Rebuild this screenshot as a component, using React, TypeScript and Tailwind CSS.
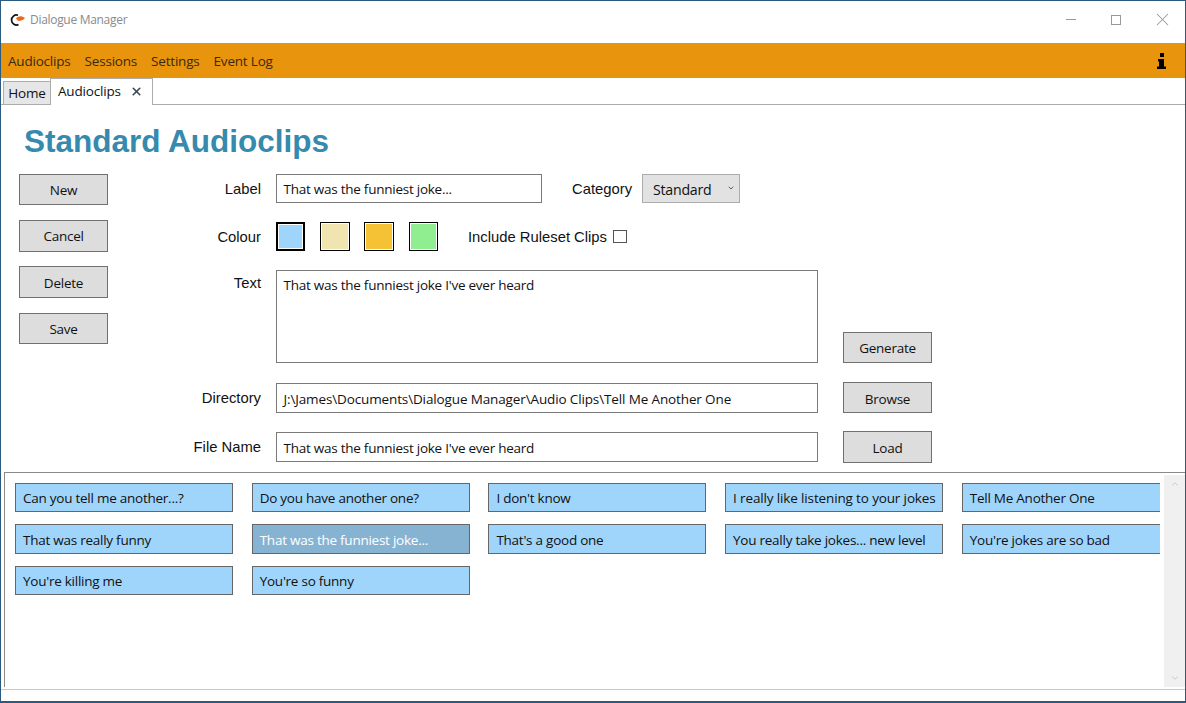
import React from 'react';
import { ChevronDown, ChevronUp, X } from 'lucide-react';

const clips = [
  "Can you tell me another...?",
  'Do you have another one?',
  "I don't know",
  'I really like listening to your jokes',
  'Tell Me Another One',
  'That was really funny',
  'That was the funniest joke...',
  "That's a good one",
  'You really take jokes... new level',
  "You're jokes are so bad",
  "You're killing me",
  "You're so funny",
];

const segoe = "font-['Open_Sans',sans-serif] text-[13.5px] tracking-[-0.25px]";

const ActionButton = ({ children, className = 'h-[31px]' }: { children: React.ReactNode; className?: string }) => (
  <button className={`w-[89px] shrink-0 bg-[#dddddd] border border-[#707070] text-[#111] ${segoe} ${className}`}>
    {children}
  </button>
);

const FieldLabel = ({ children, className = '' }: { children: React.ReactNode; className?: string }) => (
  <span className={`w-[81px] shrink-0 mr-[15px] text-right text-[14.8px] text-[#111] font-['Liberation_Sans',sans-serif] ${className}`}>
    {children}
  </span>
);

const Swatch = ({ color, selected, className = '' }: { color: string; selected?: boolean; className?: string }) => (
  <div className={`h-[29px] border-black p-px ${selected ? 'border-2' : 'border'} ${className}`}>
    <div className="w-full h-full" style={{ backgroundColor: color }} />
  </div>
);

const TextBox = ({ value, className = 'w-[542px] h-[30px]' }: { value: string; className?: string }) => (
  <div className={`px-[6.5px] pt-[2px] flex items-center bg-white border border-[#7a7a7a] text-[#111] ${segoe} ${className}`}>
    {value}
  </div>
);

export default function App() {
  return (
    <div className="w-[1186px] h-[703px] bg-white border border-[#2a5a80] border-b-2 flex flex-col overflow-hidden font-['Liberation_Sans',sans-serif]">
      <div className="h-[42px] shrink-0 flex items-center">
        <svg width="15" height="12" viewBox="0 0 15 12" className="ml-[9px] mb-[5px]">
          <path d="M8 1.2 A5 5 0 1 0 8.5 10.6" fill="none" stroke="#111" strokeWidth="1.7" />
          <path d="M6 4.5 C7 2.8 10 2 12 2.4 L15 3.8 C14 6 11 7.2 8 6.8 Z" fill="#ea6a1a" />
        </svg>
        <span className="ml-[5px] mb-[4px] text-[#8a8a8a] font-['Open_Sans',sans-serif] text-[12px] tracking-[-0.3px]">Dialogue Manager</span>
        <div className="ml-auto flex items-center mb-[5px]">
          <div className="w-[10px] h-px bg-[#999] mr-[35px]" />
          <div className="w-[10px] h-[10px] border border-[#999] mr-[31px]" />
          <X className="w-[21px] h-[21px] text-[#999] mr-[12px]" strokeWidth={1.2} />
        </div>
      </div>

      <div className={`h-[35px] shrink-0 bg-[#e8940c] flex items-center pl-[7px] pt-[2px] text-[#3a2a10] ${segoe} !tracking-[-0.2px] gap-[14px]`}>
        <span>Audioclips</span>
        <span>Sessions</span>
        <span>Settings</span>
        <span>Event Log</span>
        <svg width="9" height="16" viewBox="0 0 9 16" className="ml-auto mr-[19px] -mt-[2px]">
          <path d="M3 0H7V4H3ZM1 6H7V13.5H9V16H0V13.5H2V8.5H1Z" fill="#000" />
        </svg>
      </div>

      <div className={`h-[27px] shrink-0 flex items-end border-b border-[#acacac] text-[#111] ${segoe} !tracking-[-0.18px]`}>
        <div className="ml-[2px] w-[47px] h-[24px] -mb-px flex items-center justify-center bg-[#e6e6e6] border border-[#acacac] border-r-0">Home</div>
        <div className="w-[103px] h-[27px] -mb-px flex items-center bg-white border border-[#acacac] border-b-0 pl-[7px] pb-[2px]">
          Audioclips
          <X className="ml-[9px] w-[13px] h-[13px] text-[#37474f]" strokeWidth={3} />
        </div>
      </div>

      <div className="flex-1 flex flex-col min-h-0">
        <h1 className="ml-[23px] mt-[18px] h-[36px] leading-[36px] text-[31.5px] font-bold text-[#368aad]">Standard Audioclips</h1>

        <div className="flex mt-[16px] h-[297px] shrink-0">
          <div className="ml-[18px] -mt-px w-[89px] flex flex-col">
            <ActionButton className="h-[31px] pt-[2px]">New</ActionButton>
            <ActionButton className="h-[32px] mt-[15px]">Cancel</ActionButton>
            <ActionButton className="h-[32px] mt-[14px] pt-[3px]">Delete</ActionButton>
            <ActionButton className="h-[31px] mt-[15px] pt-[1px]">Save</ActionButton>
          </div>

          <div className="ml-[72px] -mt-px flex flex-col">
            <div className="flex items-center h-[29px]">
              <FieldLabel className="pt-[1px]">Label</FieldLabel>
              <TextBox value="That was the funniest joke..." className="w-[266px] h-[29px]" />
              <span className="ml-[30px] w-[60px] pt-[1px] whitespace-nowrap text-[14.8px] text-[#111]">Category</span>
              <div className={`ml-[10px] w-[98px] h-[29px] pl-[10px] pt-[2px] flex items-center bg-[#e2e2e2] border border-[#acacac] text-[#111] ${segoe} !text-[14.2px]`}>
                Standard
                <ChevronDown className="ml-auto mr-[4px] mb-[4px] w-[8px] h-[8px] text-[#444]" strokeWidth={2.5} />
              </div>
            </div>

            <div className="flex items-center h-[29px] mt-[19px]">
              <FieldLabel className="pt-[2px]">Colour</FieldLabel>
              <Swatch color="#a0d5fb" selected className="w-[29px]" />
              <Swatch color="#f0e4b0" className="ml-[15px] w-[30px]" />
              <Swatch color="#f5c236" className="ml-[14px] w-[30px]" />
              <Swatch color="#90ee90" className="ml-[15px] w-[29px]" />
              <span className="ml-[30px] w-[139px] whitespace-nowrap text-[14.8px] text-[#111] pt-[2px]">Include Ruleset Clips</span>
              <div className="ml-[6px] w-[14px] h-[13px] border border-[#555]" />
            </div>

            <div className="flex mt-[19px]">
              <FieldLabel className="pt-[2px]">Text</FieldLabel>
              <div className={`w-[542px] h-[93px] px-[6.5px] pt-[4px] bg-white border border-[#7a7a7a] text-[#111] ${segoe}`}>
                That was the funniest joke I've ever heard
              </div>
              <ActionButton className="ml-[25px] self-end h-[31px] pt-[1px]">Generate</ActionButton>
            </div>

            <div className="flex items-center h-[30px] mt-[20px]">
              <FieldLabel className="pt-[1px]">Directory</FieldLabel>
              <TextBox value="J:\James\Documents\Dialogue Manager\Audio Clips\Tell Me Another One" className="w-[542px] h-[30px] !tracking-[-0.13px]" />
              <ActionButton className="ml-[25px] h-[31px] mb-[1px] pt-[3px]">Browse</ActionButton>
            </div>

            <div className="flex items-center h-[30px] mt-[19px]">
              <FieldLabel className="pt-[1px]">File Name</FieldLabel>
              <TextBox value="That was the funniest joke I've ever heard" />
              <ActionButton className="ml-[25px] h-[32px] pt-[2px]">Load</ActionButton>
            </div>
          </div>
        </div>

        <div className="h-[218px] shrink-0 border-b border-[#c9c9c9] pb-[2px]">
          <div className="ml-[3px] h-full border-l border-t border-[#8a8a8a] flex">
            <div className="ml-[10px] mt-[10px] w-[1145px] min-w-0 overflow-hidden">
              <div className="w-[1190px] grid grid-cols-[repeat(5,218px)] gap-x-[18.7px] gap-y-[12px] grid-rows-[29px_30px_29px]">
                {clips.map((clip, i) => (
                  <div
                    key={clip}
                    className={`px-[7px] flex items-center whitespace-nowrap border border-[#666] ${i >= 5 && i <= 9 ? 'pt-[2px]' : 'pt-[1px]'} ${i === 6 ? 'bg-[#87b3d3] text-white' : 'bg-[#a0d5fb] text-[#111]'} ${segoe} ${i === 3 ? '!tracking-[-0.14px]' : ''}`}
                  >
                    {clip}
                  </div>
                ))}
              </div>
            </div>
            <div className="ml-[4px] w-[21px] shrink-0 mt-[2px] bg-[#f0f0f0] flex flex-col justify-between items-center py-[4px]">
              <ChevronUp className="w-[10px] h-[10px] text-[#c0c0c0]" />
              <ChevronDown className="w-[10px] h-[10px] text-[#c0c0c0]" />
            </div>
          </div>
        </div>
      </div>
    </div>
  );
}
